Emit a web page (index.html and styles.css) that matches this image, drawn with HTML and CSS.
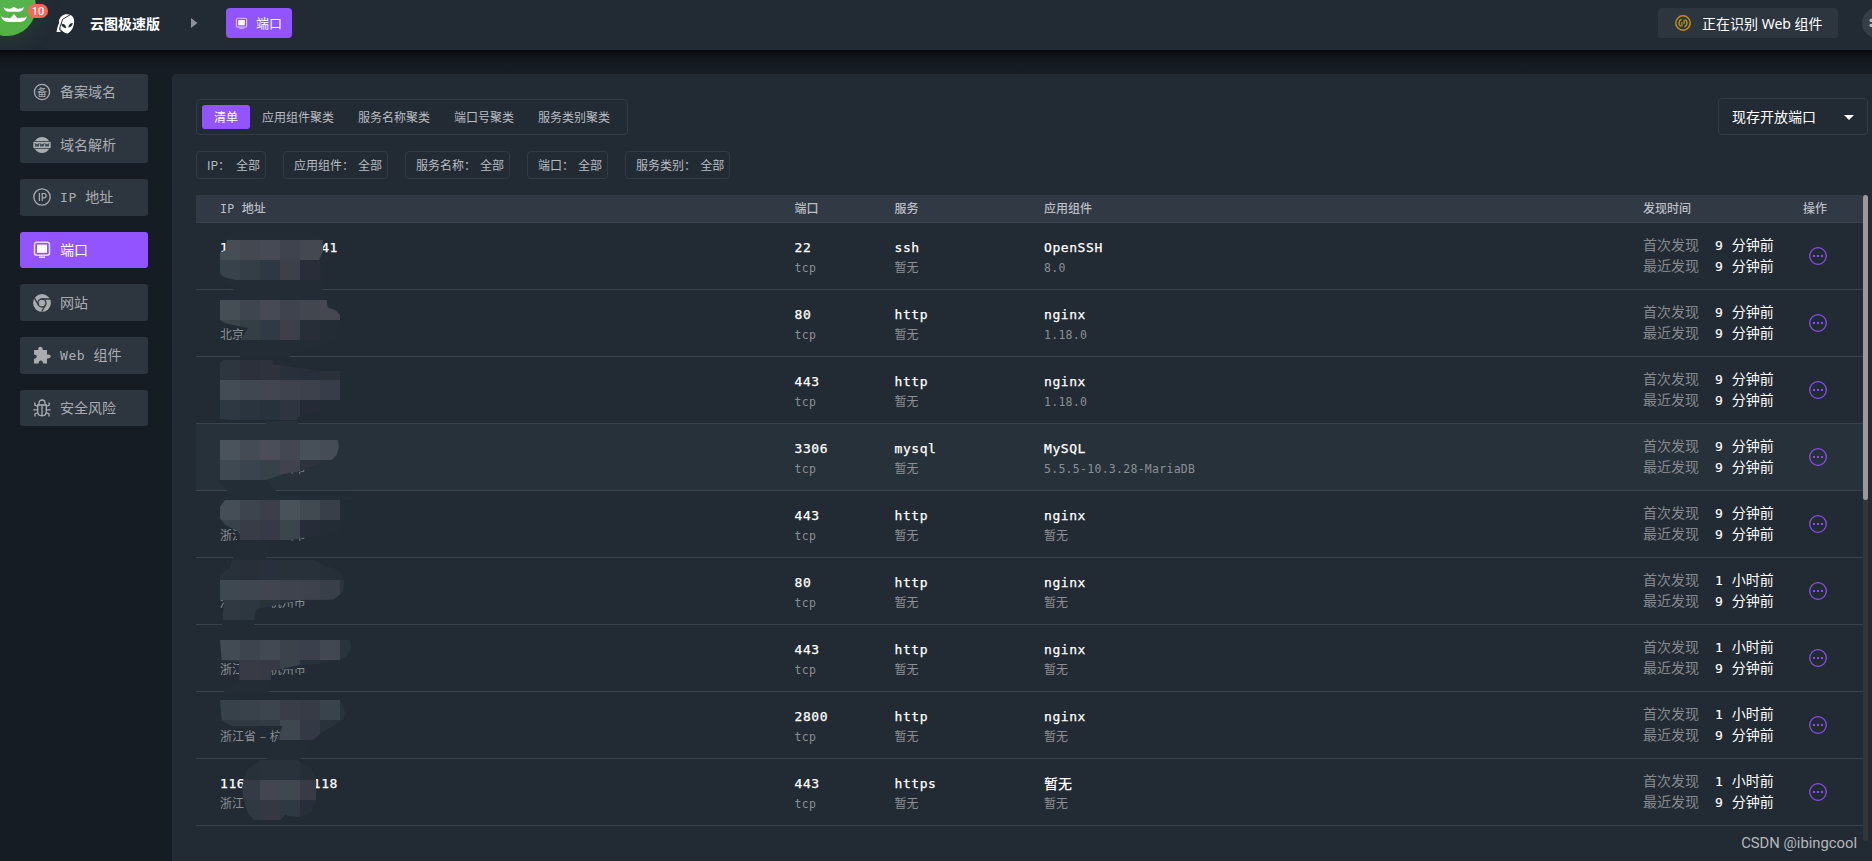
FILE: index.html
```html
<!DOCTYPE html>
<html lang="zh-CN">
<head>
<meta charset="utf-8">
<title>云图极速版 - 端口</title>
<link rel="stylesheet" href="styles.css">
</head>
<body>
<header class="topbar">
  <svg class="alien" viewBox="0 0 21 22"><path d="M3 9C4 3 8 1 12 1.300C17 1.500 19.500 5 19 10C18.600 15 16 20 12 21.400C9 21.500 6 19 4.500 16Z" fill="#fff"/><path d="M5.500 11.200C8.500 11 10.500 12.500 10.800 15.600C8 15.800 5.800 14 5.500 11.200ZM17.600 10.500C15 10.600 13.200 12.300 12.900 15.200C15.500 15.200 17.500 13.200 17.600 10.500Z" fill="#222b34"/><path d="M4 9C2 13 1 17 0.500 20L5.500 20L4 15Z" fill="#fff"/><path d="M18 0L7 6.500L3.600 17L5.600 20" fill="none" stroke="#222b34" stroke-width="1"/></svg>
  <span class="brand">云图极速版</span>
  <svg class="crumb" viewBox="0 0 7 10"><path d="M0 0L6.500 5L0 10Z" fill="#8d9298"/></svg>
  <div class="page-btn">
    <svg class="page-icon" viewBox="0 0 18 18"><rect x="1.900" y="1.700" width="14.200" height="12.300" rx="2" fill="none" stroke="#d6c0ff" stroke-width="1.600"/><path d="M4.500 4.200h9v7.300h-9z" fill="#fff"/><path d="M6 15.600h6v1.200H6z" fill="#d6c0ff"/></svg>
    <span>端口</span>
  </div>
  <div class="status">
    <svg class="spin" viewBox="0 0 16 16"><g fill="none" stroke="#bd9013"><circle cx="8" cy="8" r="7.200" stroke-width="1.500"/><path d="M6.500 4.200A4.200 4.200 0 0 0 5.700 11.400M9.500 11.800A4.200 4.200 0 0 0 10.300 4.600" stroke-width="1.500"/><path d="M6.900 7v4.500M9.100 4.500v4.500" stroke-width="1.200"/></g></svg>
    <span>正在识别 Web 组件</span>
  </div>
  <div class="avatar"><svg viewBox="0 0 10 12"><path d="M2 3.300h4M2 8.300h4" stroke="#b9bdc2" stroke-width="3.200" stroke-linecap="round"/></svg></div>
  <div class="float-ball">
    <svg viewBox="0 0 27 18"><path d="M3.500 1C5 3 8 2 9.500 3L14 1L18 3C20 2 22 3 24 1C23 5.500 20 5.700 18 5.700H9.500C6 5.700 4 4 3.500 1ZM1 10C3 13 8 11 10 12.500L14 8L17.500 12.500C20 11 25 13 27 10C26 15.500 22 16 19 16H9C5 16 2 14 1 10Z" fill="#fff"/></svg>
  </div>
  <span class="badge">10</span>
</header>

<div class="layout">
  <nav class="side">
    <div class="item"><svg viewBox="0 0 18 18"><circle cx="9" cy="9" r="7.600" fill="none" stroke="#a9adb2" stroke-width="1.300"/><text class="glyph" x="9" y="12.800" text-anchor="middle">备</text></svg><span>备案域名</span></div>
    <div class="item"><svg viewBox="0 0 18 18"><path d="M2 5A8.200 8.200 0 0 1 16 5ZM2 13A8.200 8.200 0 0 0 16 13Z" fill="#a9adb2"/><rect x="0.300" y="5.700" width="17.400" height="6.600" rx="1" fill="#a9adb2"/><path d="M2 7.300l1 3.200 1-2.600 1 2.600 1-3.200M7 7.300l1 3.200 1-2.600 1 2.600 1-3.200M12 7.300l1 3.200 1-2.600 1 2.600 1-3.200" fill="none" stroke="#2d363f" stroke-width="0.900"/></svg><span>域名解析</span></div>
    <div class="item"><svg viewBox="0 0 18 18"><circle cx="9" cy="9" r="8.200" fill="none" stroke="#a9adb2" stroke-width="1.300"/><path d="M6.400 5v8M9.200 13V5.500h1.800a2.100 2.100 0 0 1 0 4.300H9.200" fill="none" stroke="#a9adb2" stroke-width="1.200"/></svg><span><i class="m14">IP </i>地址</span></div>
    <div class="item active"><svg viewBox="0 0 18 18"><rect x="1.500" y="1.200" width="15" height="13" rx="2.200" fill="none" stroke="#e6d9ff" stroke-width="1.500"/><path d="M4 3.600h10v8.200H4z" fill="#fff"/><path d="M6 15.500h6v1.300H6z" fill="#fff"/></svg><span>端口</span></div>
    <div class="item"><svg viewBox="0 0 18 18"><circle cx="9" cy="9" r="8.900" fill="#a9adb2"/><circle cx="9" cy="9" r="4" fill="none" stroke="#2d363f" stroke-width="1.300"/><path d="M9 5H17M5.500 11L1.600 4.300M12.400 11L8.700 17.700" stroke="#2d363f" stroke-width="1.300"/></svg><span>网站</span></div>
    <div class="item"><svg viewBox="0 0 18 18"><path d="M1 4H5.300C4.300 0 10.300-0.500 9.700 4H14V8.500C19 7.500 19 13 14 12.500V17.500H10C10.300 13.500 5.300 13.500 5.600 17.500H1V12.700C4.700 12.700 4.700 8.500 1 8.500Z" fill="#a9adb2"/></svg><span><i class="m14">Web </i>组件</span></div>
    <div class="item"><svg viewBox="0 0 18 18"><g fill="none" stroke="#a9adb2" stroke-width="1.300"><path d="M4.700 6H13.300V12.500C13.300 18.200 4.700 18.200 4.700 12.500ZM6 6V4C6 0 12 0 12 4V6M9 6V16.500M4.700 7.500L1.800 6V3.500M13.300 7.500L16.200 6V3.500M4.700 10.800H0.300M13.300 10.800H17.700M5 13.500L2 15V17.500M13 13.500L16 15V17.500"/></g></svg><span>安全风险</span></div>
  </nav>

  <main class="panel">
    <div class="toolbar">
      <div class="tabs"><span class="tab on">清单</span><span class="tab">应用组件聚类</span><span class="tab">服务名称聚类</span><span class="tab">端口号聚类</span><span class="tab">服务类别聚类</span></div>
      <div class="select"><span>现存开放端口</span><svg viewBox="0 0 10 5"><path d="M0 0H10L5 5Z" fill="#fff"/></svg></div>
    </div>
    <div class="filters">
      <div class="chip"><b class="ip-label">IP：</b><b>全部</b></div>
      <div class="chip"><b>应用组件：</b><b>全部</b></div>
      <div class="chip"><b>服务名称：</b><b>全部</b></div>
      <div class="chip"><b>端口：</b><b>全部</b></div>
      <div class="chip"><b>服务类别：</b><b>全部</b></div>
    </div>
    <div class="table-wrap">
      <div class="table">
        <div class="thead"><span><i class="m12">IP </i>地址</span><span>端口</span><span>服务</span><span>应用组件</span><span>发现时间</span><span>操作</span></div>
        <div id="rows"></div>
        <svg id="mask" class="mask" viewBox="0 0 600 1923" shape-rendering="crispEdges"></svg>
      </div>
      <div class="scroll"><div class="thumb"></div></div>
    </div>
  </main>
</div>
<div class="watermark">CSDN @ibingcool</div>
<script src="app.js"></script>
</body>
</html>
```

FILE: styles.css
```css
* { box-sizing: border-box; }
body {
  margin: 0;
  height: 861px;
  overflow: hidden;
  background: #161c23;
  color: #fff;
  font-family: "Noto Sans CJK SC", sans-serif;
  font-size: 14px;
}
i, b { font-style: normal; font-weight: inherit; }
svg { display: block; flex: none; }

.m14, .m12 { font-family: "DejaVu Sans Mono", monospace; white-space: pre; }
.m14 { font-size: 13px; letter-spacing: 0.57px; }
.m12 { font-size: 11.5px; letter-spacing: 0.28px; }

.topbar {
  position: relative;
  z-index: 2;
  display: flex;
  align-items: center;
  height: 50px;
  padding: 0 0 4px 56px;
  overflow: hidden;
  background: #222b34;
}
.alien { width: 20px; height: 21px; }
.brand { margin-left: 14px; font-weight: 700; line-height: 20px; }
.crumb { width: 7px; height: 10px; margin-left: 31px; }
.page-btn {
  display: flex;
  align-items: center;
  width: 66px;
  height: 30px;
  margin-left: 28px;
  padding-left: 9px;
  border-radius: 4px;
  background: #9254ff;
  font-size: 13px;
}
.page-btn span { padding-bottom: 2px; }
.page-icon { width: 13px; height: 13px; margin-right: 8px; }
.status {
  display: flex;
  flex: none;
  align-items: center;
  width: 180px;
  height: 30px;
  margin-left: auto;
  padding-left: 17px;
  border-radius: 4px;
  background: #2d363f;
  white-space: nowrap;
}
.status span { padding-bottom: 1px; font-family: "Noto Sans", "Noto Sans CJK SC", sans-serif; font-size: 14px; }
.spin { width: 16px; height: 16px; margin-right: 11px; }
.avatar {
  display: flex;
  flex: none;
  align-items: center;
  width: 30px;
  height: 30px;
  margin: 0 -20px 0 24px;
  padding-left: 7px;
  border-radius: 50%;
  background: #353d47;
}
.avatar svg { width: 10px; height: 12px; }
.float-ball {
  position: absolute;
  left: -22px;
  top: -22px;
  width: 58px;
  height: 58px;
  padding: 28px 0 0 22px;
  border-radius: 50%;
  background: linear-gradient(180deg, #5bb552, #52b043);
  box-shadow: 0 2px 22px rgba(58, 110, 60, 0.35);
}
.float-ball svg { width: 27px; height: 18px; }
.badge {
  position: absolute;
  left: 28px;
  top: 4px;
  width: 20px;
  height: 14px;
  border-radius: 7px;
  background: #ff645d;
  font: 500 11px/15px Roboto, sans-serif;
  text-align: center;
}

.layout {
  display: flex;
  gap: 24px;
  height: 811px;
  padding: 24px 0 0 20px;
  background: linear-gradient(#070a0e 0, #10151b 7px, #161c23 16px);
}
.side { display: flex; flex: none; flex-direction: column; gap: 16px; width: 128px; }
.item {
  display: flex;
  flex: none;
  align-items: center;
  gap: 9px;
  height: 36.6px;
  padding-left: 13px;
  border-radius: 3px;
  background: #2d363f;
  color: #a9adb2;
  white-space: nowrap;
}
.item svg { width: 18px; height: 18px; }
.item > span { padding-bottom: 2px; }
.item.active { background: #9254ff; color: #fff; }
.glyph { font-size: 10px; fill: #a9adb2; }

.panel {
  flex: 1;
  min-width: 0;
  padding: 24px 4px 0 24px;
  border-radius: 4px 0 0 0;
  background: #222b34;
}
.toolbar { display: flex; justify-content: space-between; height: 37px; }
.tabs {
  display: flex;
  height: 36px;
  margin-top: 1px;
  padding: 5px;
  border: 1px solid #323b44;
  border-radius: 4px;
}
.tab { height: 24px; padding: 0 12px; border-radius: 3px; color: #b8bcc0; font-size: 12px; line-height: 23px; }
.tab.on { background: #9254ff; color: #fff; }
.select {
  display: flex;
  align-items: center;
  justify-content: space-between;
  width: 150px;
  height: 37px;
  padding: 0 13px 0 13px;
  border: 1px solid #323b44;
  border-radius: 4px;
}
.select span { padding-bottom: 2px; }
.select svg { width: 10px; height: 5px; margin-top: 1px; }
.filters { display: flex; gap: 17px; margin-top: 16px; }
.chip {
  display: flex;
  gap: 4px;
  height: 28px;
  padding: 0 5px 0 10px;
  border: 1px solid #323b44;
  border-radius: 4px;
  color: #b8bcc0;
  font-size: 12px;
  line-height: 25px;
}
.ip-label { width: 25px; }

.table-wrap { display: flex; margin-top: 16px; }
.table { position: relative; flex: 1; }
.thead, .row {
  display: grid;
  grid-template-columns: 574.5px 100px 149.500px 599px 160px 1fr;
  padding-left: 24px;
  white-space: nowrap;
}
.thead {
  height: 28px;
  border-bottom: 1px solid #3a434d;
  background: #303944;
  color: #bbbfc4;
  font-size: 12px;
  font-weight: 500;
  line-height: 26px;
}
.row { height: 67px; border-bottom: 1px solid #3a434c; }
.row.hover { background: #27313a; }
.cell { padding-top: 14px; }
.main { display: flex; height: 20px; font-weight: 500; line-height: 20px; }
.main .m14 { -webkit-text-stroke: 0.25px #fff; line-height: 21px; }
.when .m14 { -webkit-text-stroke: 0.15px #fff; }
.masked { justify-content: space-between; width: 118px; }
.sub { height: 19px; color: #8b8f93; font-size: 12px; line-height: 19px; word-spacing: 1px; }
.time { padding-top: 11px; }
.time div { display: flex; gap: 16px; height: 21px; line-height: 21px; }
.label { color: #868a8e; }
.more { width: 18px; height: 18px; margin: 24px 0 0 6px; }
.mask { position: absolute; left: 4px; top: 25px; width: 200px; height: 641px; }
.scroll { width: 5px; height: 646px; border-radius: 3px; background: #333536; }
.thumb { height: 305px; border-radius: 3px; background: #9b999b; }

.watermark {
  position: absolute;
  right: 15px;
  top: 833px;
  color: #b4b7ba;
  font: 400 14.8px/20px Roboto, sans-serif;
}
```

FILE: app.js
```js
const none = '暂无';
const place = '浙江省 – 杭州市';
const rows = [
  { ip: ['1', '41'], at: '', port: 22, svc: 'ssh', app: 'OpenSSH', ver: '8.0', first: '9 分钟前' },
  { at: '北京', port: 80, svc: 'http', app: 'nginx', ver: '1.18.0', first: '9 分钟前' },
  { at: '', port: 443, svc: 'http', app: 'nginx', ver: '1.18.0', first: '9 分钟前' },
  { at: place, port: 3306, svc: 'mysql', app: 'MySQL', ver: '5.5.5-10.3.28-MariaDB', first: '9 分钟前', hover: true },
  { at: place, port: 443, svc: 'http', app: 'nginx', ver: none, first: '9 分钟前' },
  { at: place, port: 80, svc: 'http', app: 'nginx', ver: none, first: '1 小时前' },
  { at: place, port: 443, svc: 'http', app: 'nginx', ver: none, first: '1 小时前' },
  { at: place, port: 2800, svc: 'http', app: 'nginx', ver: none, first: '1 小时前' },
  { ip: ['116', '118'], at: '浙江', port: 443, svc: 'https', app: none, ver: none, first: '1 小时前' }
];

// Latin runs use the monospace face, Chinese keeps the body font.
const mono = (text, size) => String(text).replace(/[\x20-\x7e]+/g, run => `<i class="m${size}">${run}</i>`);
const when = (label, text) => `<div><span class="label">${label}</span><span class="when">${mono(text, 14)}</span></div>`;
const cell = (main, sub) => `<div class="cell"><div class="main">${mono(main, 14)}</div><div class="sub">${mono(sub, 12)}</div></div>`;
const more = '<svg class="more" viewBox="0 0 18 18"><circle cx="9" cy="9" r="8.300" fill="none" stroke="#8650e6" stroke-width="1.300"/><path d="M4 8h2v2H4zM8 8h2v2H8zM12 8h2v2h-2z" fill="#8650e6"/></svg>';

document.getElementById('rows').innerHTML = rows.map(r => `
  <div class="row${r.hover ? ' hover' : ''}">
    <div class="cell"><div class="main masked">${(r.ip || []).map(p => mono(p, 14)).join('')}</div><div class="sub">${r.at}</div></div>
    ${cell(r.port, 'tcp')}${cell(r.svc, none)}${cell(r.app, r.ver)}
    <div class="time">${when('首次发现', r.first)}${when('最近发现', '9 分钟前')}</div>
    ${more}
  </div>`).join('');

// Privacy mosaic: flat smears first, then 60-unit tiles cut to a brushed outline.
const smears = [
  ['#232c35', 'M78 60L100 38H340L370 60V210H108V205L60 170V110L78 98Z'],
  ['#232c35', 'M108 200H369V215L380 250H420L405 365L270 400V415H120V360L144 324L60 300V240Z'],
  ['#28313a', 'M198 603H294V620H198Z'],
  ['#27313a', 'M60 660H415V725L316 745L295 757L275 757L200 790H60Z'],
  ['#232d36', 'M50 780H200L240 826H440L470 840H60L96 825Z'],
  ['#232c35', 'M60 840H420V940L320 950L265 958L210 975L196 1022H96L110 960L120 935L60 900Z'],
  ['#222b34', 'M78 1140L215 1140L212 1162L180 1162L162 1200V1220H66L72 1140Z'],
  ['#232c35', 'M60 1260H450V1320L360 1328L300 1345L213 1350V1390L204 1420H66L117 1380V1325H60Z'],
  ['#232c35', 'M248 1518H360L330 1570L302 1620H200Z']
];
const patches = [
  { y: 60, clip: '80,60 368,60 370,92 357,120 360,125 360,180 105,180 70,170 60,160 60,98 78,90', t: ['#454e55 #444951 #474a54 #3f434d #444851 #42474f', '#38424b #343e47 #2e3842 #3d404b #282d39 #252c35'] },
  { y: 240, clip: '60,240 380,240 383,262 408,272 420,285 420,300 360,300 360,360 122,360 144,324 75,310 60,300', t: ['#454e55 #3f454e #474a54 #3e434d #42464f #454851', '#3b444b #343e45 #303a44 #3d404b #282e38 #242c35'] },
  { y: 420, clip: '70,420 216,420 220,432 363,453 420,453 420,540 360,540 360,578 291,590 294,600 100,600 60,596 60,430', t: ['#2d363f #2c303b #2e323d #2a303b #292f3a #2a313a', '#434c54 #404751 #424650 #40434e #3d414c #383e49', '#2e3842 #2a343e #28323c #2f3441 #242b36 #232c35'] },
  { y: 660, clip: '60,660 412,660 417,680 410,705 395,720 360,720 360,732 300,754 250,762 198,780 60,780', t: ['#4a535b #444b54 #4b4e58 #434751 #475059 #454c55', '#3f4952 #3a444e #36414a #40434e #2c333d #29333c'] },
  { y: 840, clip: '75,840 420,840 420,900 360,900 360,945 270,960 120,960 118,936 75,914 60,895 60,860', t: ['#454e56 #3e444d #3a3f49 #495159 #414951 #383f49', '#38424a #383c47 #363a46 #3c454e #272d38 #242d36'] },
  { y: 1020, clip: '95,1020 340,1020 370,1035 415,1050 433,1080 430,1115 400,1139 300,1140 175,1166 165,1175 163,1200 68,1200 72,1140 60,1140 60,1062 90,1045', t: ['#28313a #292f39 #2a303b #283039 #283039 #262f38 #252e37', '#3e4850 #40464f #41454f #3e434d #3e424c #393f49 #2b333c', '#303942 #2d3740 #293239 #252e37 #242d36 #232c35 #232c35'] },
  { y: 1260, clip: '60,1260 450,1260 453,1280 440,1310 420,1320 360,1332 300,1335 213,1352 213,1380 117,1380 117,1326 65,1320', t: ['#424b53 #3d444d #424952 #3c424c #3b414c #414851 #2b343d', '#2d3740 #383b46 #363a45 #38434b #28313b #252e37 #242d36'] },
  { y: 1440, clip: '60,1440 420,1440 435,1475 430,1500 400,1517 365,1538 340,1560 230,1560 248,1518 95,1518 65,1502', t: ['#364149 #39424a #3d444d #393d48 #363b46 #39434b #2a333c', '#303942 #303842 #323a44 #3e464f #343a45 #29323b #252e37'] },
  { y: 1620, clip: '180,1620 290,1620 330,1640 348,1675 348,1740 335,1775 300,1790 265,1788 258,1782 240,1800 160,1800 142,1775 130,1735 126,1700 140,1650', t: ['#232c35 #28313a #29323b #29313a #252e37', '#343b45 #343b45 #414650 #41474f #363b46', '#28313a #303842 #333843 #303943 #282e39'] }
];
let svg = smears.map(([c, d]) => `<path fill="${c}" d="${d}"/>`).join('');
patches.forEach((p, n) => {
  svg += `<clipPath id="c${n}"><polygon points="${p.clip}"/></clipPath><g clip-path="url(#c${n})">`;
  p.t.forEach((line, j) => line.split(' ').forEach((c, i) => {
    svg += `<rect x="${60 + i * 60}" y="${p.y + j * 60}" width="60" height="60" fill="${c}"/>`;
  }));
  svg += '</g>';
});
document.getElementById('mask').innerHTML = svg;
```
